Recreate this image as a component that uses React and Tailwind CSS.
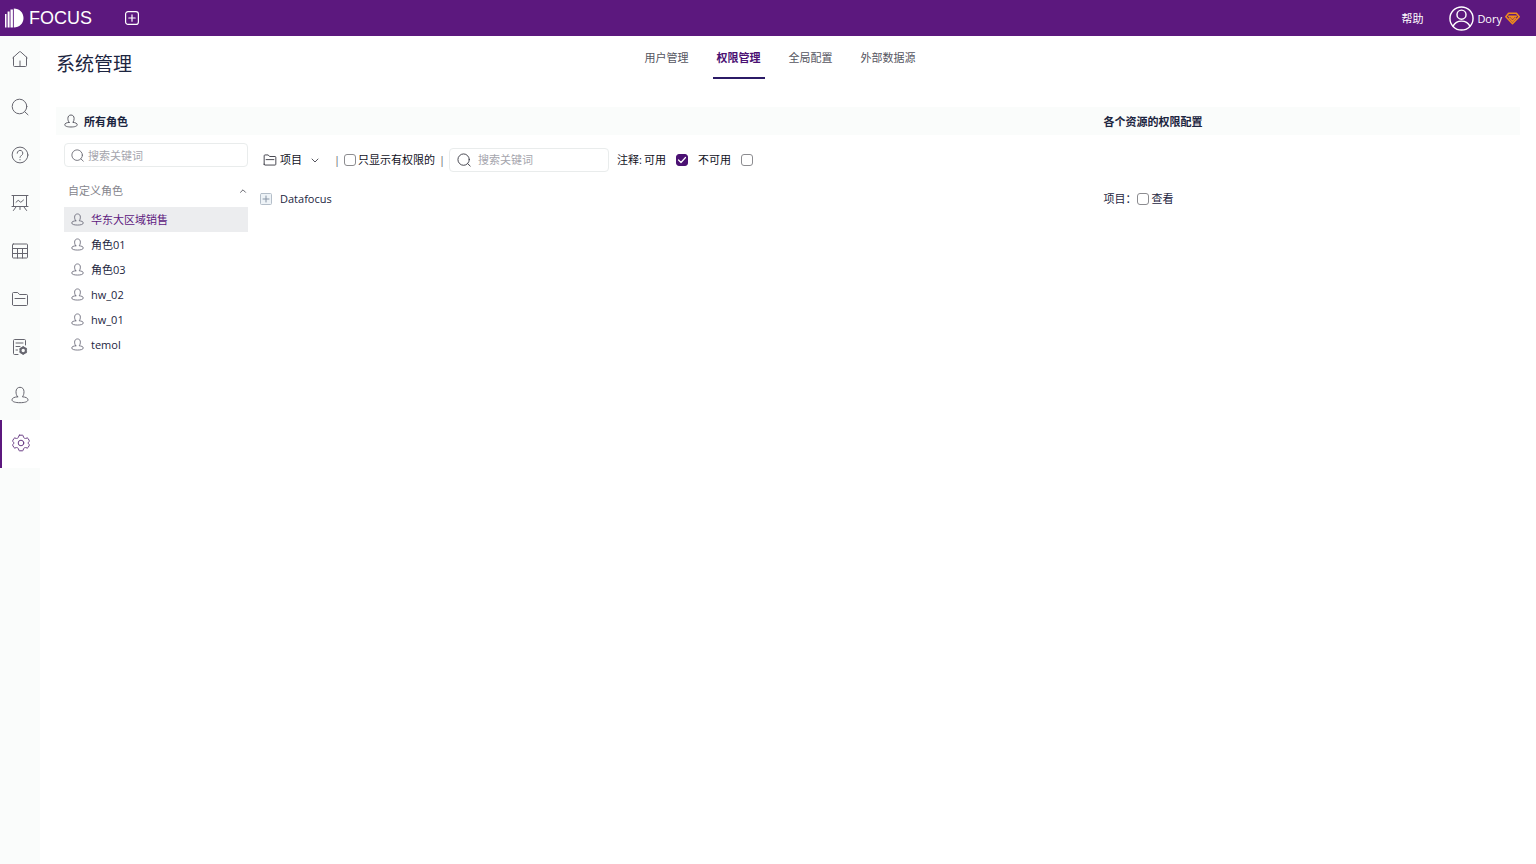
import { useState } from 'react'

const navItems = [
  { id: 'home', label: '首页', icon: HomeIcon },
  { id: 'search', label: '搜索', icon: SearchIcon },
  { id: 'help', label: '帮助', icon: HelpIcon },
  { id: 'board', label: '看板', icon: BoardIcon },
  { id: 'table', label: '数据表', icon: TableIcon },
  { id: 'folder', label: '资源', icon: FolderIcon },
  { id: 'config', label: '配置', icon: DocGearIcon },
  { id: 'user', label: '用户', icon: UserIcon },
  { id: 'settings', label: '系统管理', icon: GearIcon },
]

const tabs = ['用户管理', '权限管理', '全局配置', '外部数据源']

const roles = ['华东大区域销售', '角色01', '角色03', 'hw_02', 'hw_01', 'temol']

function Icon({ size = 18, box = 18, stroke = 1, className = '', children }) {
  return (
    <svg
      width={size}
      height={size}
      viewBox={`0 0 ${box} ${box}`}
      fill="none"
      stroke="currentColor"
      strokeWidth={stroke}
      strokeLinecap="round"
      strokeLinejoin="round"
      className={`shrink-0 ${className}`}
      aria-hidden="true"
    >
      {children}
    </svg>
  )
}

function HomeIcon(props) {
  return (
    <Icon {...props}>
      <path d="M2.5 7.2v8.3c0 .6.4 1 1 1h11c.6 0 1-.4 1-1V7.2M1.8 7.8 8.3 1.9c.4-.4 1-.4 1.4 0l6.5 5.9M9 11v5.5" />
    </Icon>
  )
}

function SearchIcon(props) {
  return (
    <Icon {...props}>
      <circle cx="8.5" cy="8.5" r="7.3" />
      <path d="m13.8 13.8 3.2 3" />
    </Icon>
  )
}

function HelpIcon(props) {
  return (
    <Icon {...props}>
      <circle cx="9" cy="9" r="7.9" />
      <path d="M6.2 7.2a2.8 2.8 0 1 1 4.3 2.3c-.9.6-1.5 1-1.5 1.9M9 13.5v.4" />
    </Icon>
  )
}

function BoardIcon(props) {
  return (
    <Icon {...props}>
      <path d="M1 1.5h16M2.5 1.5v11M15.5 1.5v11M1 12.5h16M5 8.3l2.2-2 2.6 2L12.5 6M5 13l-2.6 3.5M13 13l2.6 3.5M9 12.5v3" />
    </Icon>
  )
}

function TableIcon(props) {
  return (
    <Icon {...props}>
      <rect x="1.5" y="2" width="15" height="14" rx=".8" />
      <path d="M1.5 6.5h15M1.5 11.5h15M6.5 6.5V16M11.5 6.5V16" />
    </Icon>
  )
}

function FolderIcon(props) {
  return (
    <Icon {...props}>
      <path d="M1.5 14.5v-11c0-.6.4-1 1-1h4.2l1.8 2h7c.6 0 1 .4 1 1v9c0 .6-.4 1-1 1h-13c-.6 0-1-.4-1-1ZM4 8.5h10" />
    </Icon>
  )
}

function DocGearIcon(props) {
  return (
    <Icon {...props}>
      <path d="M7 16.5H3.5c-.6 0-1-.4-1-1v-13c0-.6.4-1 1-1h10c.6 0 1 .4 1 1V7M5 5h7M5 8.5h4M5 12h1.5" />
      <circle cx="12.2" cy="12.500" r="2.700" strokeWidth="2" />
      <path d="M12.200 8.300v1M12.200 15.700v1M8.600 10.400l.8.500M15 14.100l.8.500M8.600 14.600l.8-.5M15 10.900l.8-.5" strokeWidth="1.800" strokeLinecap="butt" />
    </Icon>
  )
}

function UserIcon(props) {
  return (
    <Icon {...props}>
      <path d="M6.600 10.800C5.500 9.500 5 7.800 5 5.700 5 3 6.600 1.300 9 1.300s4 1.700 4 4.400c0 2.100-.5 3.800-1.600 5.100 3.200.2 5.600 1.200 5.600 3 0 2-3.500 2.900-8 2.900s-8-.9-8-2.900c0-1.800 2.400-2.800 5.600-3Z" />
    </Icon>
  )
}

function GearIcon(props) {
  return (
    <Icon {...props}>
      <path d="M7.500 1.200h3q.5 0 .6.500l.4 1.500q.2.500.7.800l.5.300q.5.200 1 .1l1.400-.4q.6-.1.900.4l1.300 2.300q.3.500-.1.900l-1 .9q-.3.200-.3.500t.3.500l1 .9q.4.400.1.900L16 13.600q-.3.500-.9.400l-1.400-.4q-.5-.1-1 .1l-.5.300q-.5.300-.7.800l-.4 1.500q-.1.500-.6.500h-3q-.5 0-.6-.5l-.4-1.500q-.2-.5-.7-.8l-.5-.3q-.5-.2-1-.1l-1.400.4q-.6.1-.9-.4L.7 11.300q-.3-.5.1-.9l1-.9q.3-.2.300-.5t-.3-.5l-1-.9q-.4-.4-.1-.9L2 4.400q.3-.5.900-.4l1.400.4q.5.100 1-.1l.5-.3q.5-.3.700-.8l.4-1.500q.1-.5.600-.5z" />
      <circle cx="9" cy="9" r="2.800" />
    </Icon>
  )
}

function Checkbox({ checked, onChange }) {
  return (
    <span className="grid shrink-0">
      <input
        type="checkbox"
        checked={checked}
        onChange={onChange}
        className="col-start-1 row-start-1 size-3 appearance-none rounded-[3px] border border-[#8c8c90] bg-white checked:border-[#4b1173] checked:bg-[#4b1173]"
      />
      {checked && (
        <Icon size={12} box={12} stroke={1.2} className="pointer-events-none col-start-1 row-start-1 text-white">
          <path d="m2.5 6 2.5 2.5 4.5-5" />
        </Icon>
      )}
    </span>
  )
}

function TopBar() {
  return (
    <header className="flex h-9 items-center bg-[#5c187e] text-white">
      <a href="#" className="flex items-center gap-[5px] pl-1">
        <svg width="20" height="20" viewBox="0 0 20 20" fill="currentColor" aria-hidden="true">
          <path d="M1 6h1.500v13.500H1zM3.600 3.500h2v16h-2zM6.500 1.500h2.400v18H6.500zM9.800.5c5.600 0 9.700 4 9.700 9.500s-4.100 9.500-9.700 9.500z" />
        </svg>
        <span className="font-['Liberation_Sans',sans-serif] text-lg">FOCUS</span>
      </a>
      <button type="button" aria-label="新建" className="ml-8">
        <Icon size={16} box={16} stroke={1.2}>
          <rect x="1.6" y="1.6" width="12.8" height="12.8" rx="2.5" />
          <path d="M8 4.8v6.4M4.8 8h6.4" />
        </Icon>
      </button>
      <div className="ml-auto flex items-center pr-4">
        <a href="#" className="mr-[26px] pt-px">帮助</a>
        <button type="button" className="flex items-center gap-[3px]">
          <Icon size={25} box={26} stroke={1.5}>
            <circle cx="13" cy="13" r="12" />
            <circle cx="13" cy="9" r="4.7" />
            <path d="M4.2 21c2-3.9 5-5.3 8.8-5.3s6.800 1.400 8.800 5.300" />
          </Icon>
          <span className="pt-px">Dory</span>
          <svg width="15" height="13" viewBox="0 0 15 13" fill="none" stroke="#f08c1a" strokeWidth="1.5" strokeLinejoin="round" aria-hidden="true">
            <path d="M3.600 1.200h7.800l2.800 3.600-6.700 7-6.700-7zM3.200 4.300h8.600M4 5.500l3.500 3.700L11 5.500M5.500 4.300l2 2.200 2-2.200" />
          </svg>
        </button>
      </div>
    </header>
  )
}

function SideNav() {
  return (
    <nav className="w-10 shrink-0 bg-[#fafcfb]">
      {navItems.map(({ id, label, icon: NavIcon }) => (
        <a
          key={id}
          href="#"
          aria-label={label}
          className={`flex h-12 items-center justify-center pb-0.5 ${
            id === 'settings' ? 'border-l-2 border-[#5c187e] bg-white text-[#6a3d85]' : 'text-[#66666f]'
          }`}
        >
          <NavIcon />
        </a>
      ))}
    </nav>
  )
}

function RoleList() {
  const [selected, setSelected] = useState(roles[0])

  return (
    <aside className="w-50 shrink-0 px-2 pt-2">
      <div className="flex h-6 items-center gap-1 rounded-sm border border-[#e9ecec] px-1.5">
        <SearchIcon size={13} stroke={1.2} className="text-[#66666f]" />
        <input
          type="text"
          aria-label="搜索角色"
          placeholder="搜索关键词"
          className="w-full min-w-0 pt-px outline-none placeholder:text-[#a5a5ad]"
        />
      </div>
      <button type="button" className="mt-3 flex h-6 w-full items-center justify-between pl-1 text-[#85858d]">
        自定义角色
        <Icon size={10} box={10} className="text-[#66666e]">
          <path d="m2.5 6.3 2.500-2.500 2.500 2.500" />
        </Icon>
      </button>
      <ul className="mt-1">
        {roles.map((role) => (
          <li key={role}>
            <button
              type="button"
              onClick={() => setSelected(role)}
              className={`flex h-[25px] w-full items-center gap-[7px] pl-[7px] ${
                role === selected ? 'bg-[#ecedef] text-[#5c187e]' : ''
              }`}
            >
              <UserIcon size={13} stroke={1.2} className="text-[#6a6a78]" />
              {role}
            </button>
          </li>
        ))}
      </ul>
    </aside>
  )
}

function Toolbar() {
  const [onlyAllowed, setOnlyAllowed] = useState(false)
  const [available, setAvailable] = useState(true)
  const [unavailable, setUnavailable] = useState(false)

  return (
    <div className="flex h-[50px] items-center pl-[7px] whitespace-nowrap text-[#10101c]">
      <FolderIcon size={14} stroke={1.2} className="text-[#3c3c46]" />
      <select aria-label="资源类型" className="ml-[3px] w-10 appearance-none outline-none">
        <option>项目</option>
      </select>
      <Icon size={10} box={10} className="pointer-events-none -ml-2.5 text-[#55555e]">
        <path d="m2 4 3 3 3-3" />
      </Icon>
      <span className="ml-3.5 text-[#66666e]">|</span>
      <label className="ml-1 flex items-center gap-0.5">
        <Checkbox checked={onlyAllowed} onChange={(e) => setOnlyAllowed(e.target.checked)} />
        只显示有权限的
      </label>
      <span className="ml-1 text-[#66666e]">|</span>
      <div className="ml-1 flex h-6 w-40 items-center gap-[7px] rounded-sm border border-[#e9ecec] px-[7px]">
        <SearchIcon size={14} stroke={1.2} className="text-[#3c3c46]" />
        <input
          type="text"
          aria-label="搜索资源"
          placeholder="搜索关键词"
          className="w-full min-w-0 outline-none placeholder:text-[#a5a5ad]"
        />
      </div>
      <span className="ml-2">注释:</span>
      <label className="ml-0.5 flex items-center gap-2.5">
        可用
        <Checkbox checked={available} onChange={(e) => setAvailable(e.target.checked)} />
      </label>
      <label className="ml-2.5 flex items-center gap-2.5">
        不可用
        <Checkbox checked={unavailable} onChange={(e) => setUnavailable(e.target.checked)} />
      </label>
    </div>
  )
}

export default function App() {
  const [tab, setTab] = useState('权限管理')
  const [canView, setCanView] = useState(false)

  return (
    <div className="flex min-h-screen flex-col bg-white font-['Open_Sans','Noto_Sans_CJK_SC',sans-serif] text-[11px] leading-4 text-[#1c2540]">
      <TopBar />
      <div className="flex flex-1">
        <SideNav />
        <main className="min-w-0 flex-1 px-4">
          <div className="grid h-[71px] grid-cols-[1fr_auto_1fr] items-start pr-4">
            <h1 className="pt-3.5 text-[19px] leading-7">系统管理</h1>
            <div role="tablist" className="flex gap-5">
              {tabs.map((name) => (
                <button
                  key={name}
                  type="button"
                  role="tab"
                  aria-selected={name === tab}
                  onClick={() => setTab(name)}
                  className={`h-[43px] border-b-2 px-1 pt-0.5 ${
                    name === tab ? 'border-[#2b1a66] font-bold text-[#4b1173]' : 'border-transparent text-[#55555f]'
                  }`}
                >
                  {name}
                </button>
              ))}
            </div>
          </div>

          <div className="flex h-7 items-center bg-[#fafcfb] font-bold">
            <h2 className="flex flex-1 items-center gap-1.5 pl-2">
              <UserIcon size={14} stroke={1.2} className="text-[#55555f]" />
              <span className="pt-0.5">所有角色</span>
            </h2>
            <h2 className="w-[29%] pt-0.5 pl-2">各个资源的权限配置</h2>
          </div>

          <div className="flex">
            <RoleList />
            <section className="min-w-0 flex-1">
              <Toolbar />
              <div className="flex h-7 items-center gap-2 pl-1">
                <button type="button" aria-label="展开" className="text-[#8794a5]">
                  <Icon size={12} box={12}>
                    <rect x=".5" y=".5" width="11" height="11" rx="1" fill="#eef3f7" stroke="#b4bec9" />
                    <path d="M6 3v6M3 6h6" />
                  </Icon>
                </button>
                Datafocus
              </div>
            </section>
            <section className="w-[29%] pt-[50px]">
              <div className="flex h-7 items-center pl-2">
                <span className="w-[34px]">项目：</span>
                <label className="flex items-center gap-0.5">
                  <Checkbox checked={canView} onChange={(e) => setCanView(e.target.checked)} />
                  查看
                </label>
              </div>
            </section>
          </div>
        </main>
      </div>
    </div>
  )
}
